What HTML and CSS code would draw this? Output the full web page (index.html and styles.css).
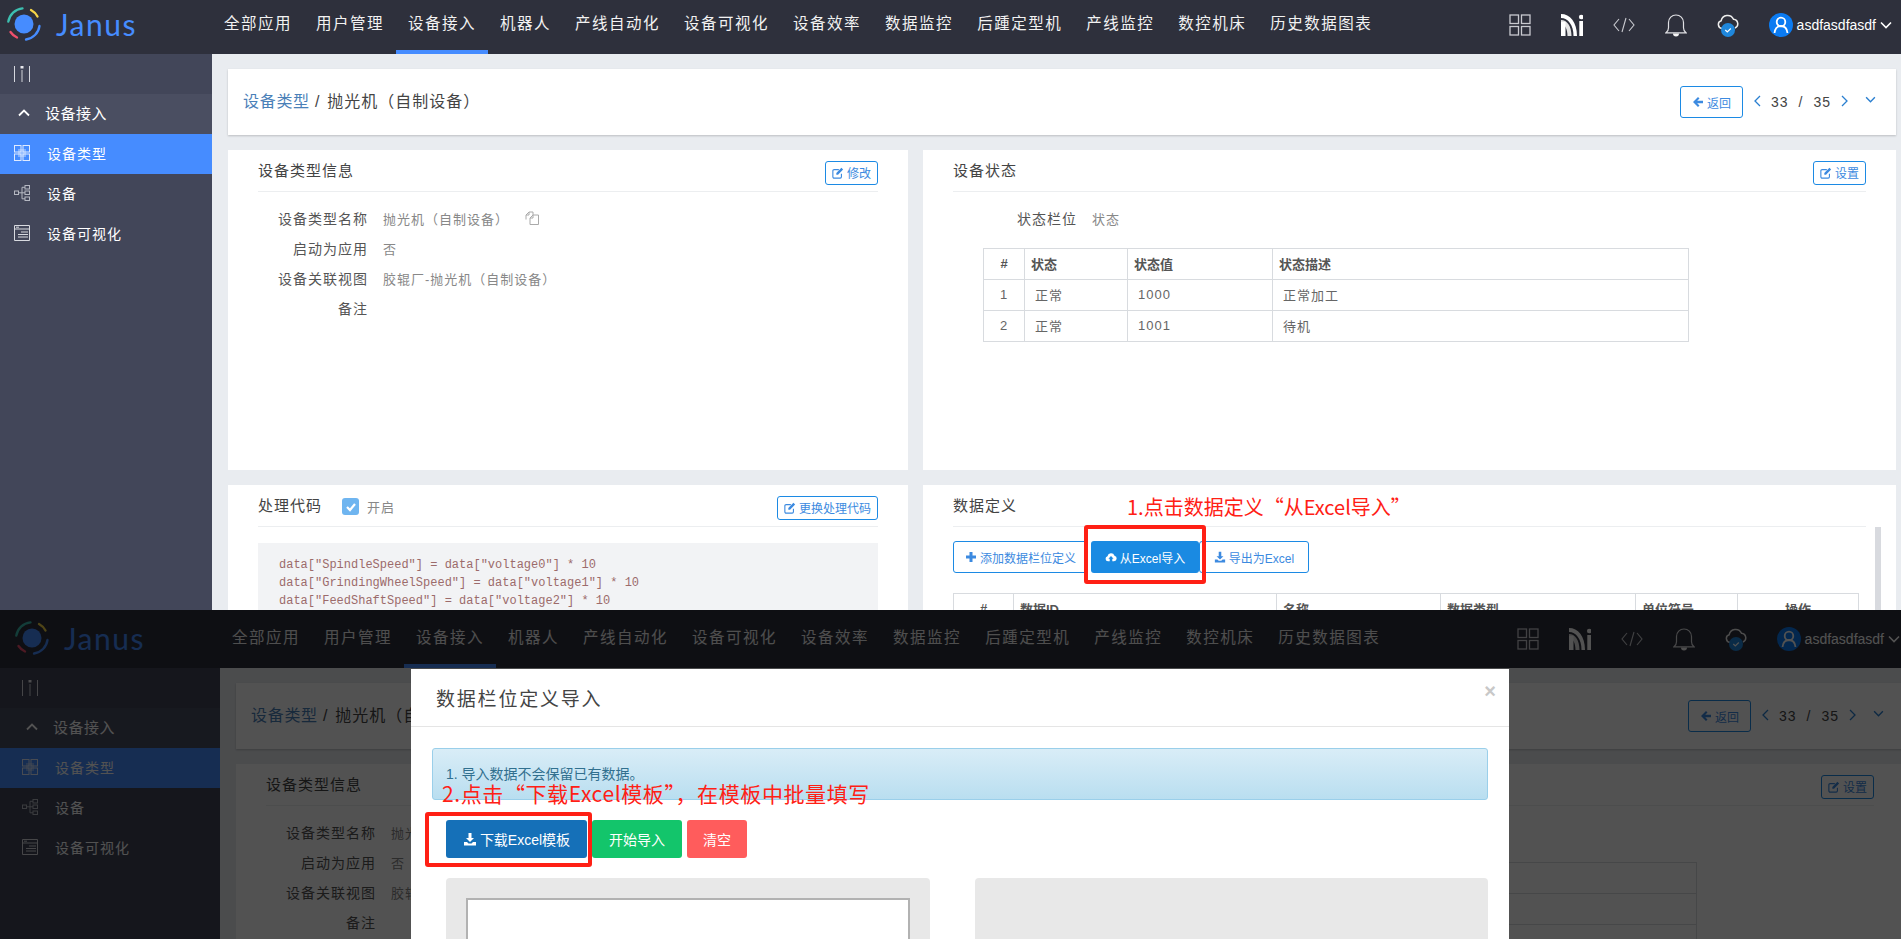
FILE: index.html
```html
<!DOCTYPE html>
<html lang="zh-CN">

<head>
    <meta charset="UTF-8">
    <title>Janus 设备接入</title>
    <link rel="stylesheet" href="styles.css">
</head>

<body>

    <!-- 图标 -->
    <svg class="sprite" xmlns="http://www.w3.org/2000/svg">
        <symbol id="i-grid" viewBox="0 0 22 22"><g fill="none" stroke="currentColor" stroke-width="1.3"><rect x="1" y="1" width="8.5" height="8.5"/><rect x="12.5" y="1" width="8.5" height="8.5"/><rect x="1" y="12.5" width="8.5" height="8.5"/><rect x="12.5" y="12.5" width="8.5" height="8.5"/></g></symbol>
        <symbol id="i-ni" viewBox="0 0 22 22"><path d="M0 0C9 0 16 8 16 22H12.500C12.500 11 7 4 0 4Z" fill="#fff"/><path d="M0 6C6 6 10.500 12 10.500 22H6.500C6.500 15 4 10 0 10Z" fill="#e4e4e4"/><rect x="0" y="8" width="4.500" height="14" fill="#fff"/><rect x="18.300" y="7" width="3.700" height="15" fill="#fff"/><circle cx="20.200" cy="3" r="2.300" fill="#fff"/></symbol>
        <symbol id="i-code" viewBox="0 0 22 16"><path d="M6 2 1 8l5 6M16 2l5 6-5 6M13 1 9 15" fill="none" stroke="currentColor" stroke-width="1.1"/></symbol>
        <symbol id="i-bell" viewBox="0 0 22 23"><path d="M1 18.800c1.500-1 2.500-2.500 2.500-5V8.500a7.500 7.500 0 0 1 15 0v5.300c0 2.500 1 4 2.500 5Z" fill="none" stroke="#e0e0e4" stroke-width="1.200"/><path d="M8 19.500h6a3 3 0 0 1-6 0Z" fill="#f5f5f5"/></symbol>
        <symbol id="i-cloud" viewBox="0 0 22 23"><path d="M5 14.500a4 4 0 0 1-.8-7.800 6.500 6.500 0 0 1 12.300-1.500 4.600 4.600 0 0 1 1.500 8.800" fill="none" stroke="#eee" stroke-width="1.500"/><circle cx="11" cy="16" r="7" fill="#1f87dc"/><path d="m8.300 16 2 2 3.500-3.500" fill="none" stroke="#fff" stroke-width="1.200"/></symbol>
        <symbol id="i-user" viewBox="0 0 24 24"><circle cx="12" cy="12" r="12" fill="#0b7bf2"/><circle cx="12" cy="9" r="4.300" fill="none" stroke="#fff" stroke-width="1.800"/><path d="M5.500 20c.5-4.500 3-7 6.500-7s6 2.500 6.500 7" fill="none" stroke="#fff" stroke-width="1.800"/></symbol>
        <symbol id="i-chev-down" viewBox="0 0 12 8"><path d="m1 1.500 5 5 5-5" fill="none" stroke="currentColor" stroke-width="1.600"/></symbol>
        <symbol id="i-chev-up" viewBox="0 0 12 8"><path d="m1 6.500 5-5 5 5" fill="none" stroke="currentColor" stroke-width="1.800"/></symbol>
        <symbol id="i-chev-left" viewBox="0 0 7 12"><path d="M6 1 1 6l5 5" fill="none" stroke="currentColor" stroke-width="1.300"/></symbol>
        <symbol id="i-chev-right" viewBox="0 0 7 12"><path d="m1 1 5 5-5 5" fill="none" stroke="currentColor" stroke-width="1.300"/></symbol>
        <symbol id="i-toggle" viewBox="0 0 16 16"><path d="M.5 0v16M15.500 0v16" stroke="#d5d7de" fill="none"/><path d="M8 4v12" stroke="#8a8d99" stroke-width="2" fill="none"/><rect x="6.500" y="0" width="3" height="2.500" fill="#e8e8ee"/></symbol>
        <symbol id="i-apps" viewBox="0 0 16 16"><path d="M4 4h8v8H4Z" fill="#cfe0ff" opacity=".45"/><g fill="none" stroke="#dfeaff" stroke-width="1"><rect x=".5" y=".5" width="6.500" height="6.500"/><rect x="9" y=".5" width="6.500" height="6.500"/><rect x=".5" y="9" width="6.500" height="6.500"/><rect x="9" y="9" width="6.500" height="6.500"/></g></symbol>
        <symbol id="i-tree" viewBox="0 0 16 16"><g fill="none" stroke="#b5b8c2" stroke-width="1"><rect x=".5" y="6" width="4" height="3.500"/><rect x="11" y=".5" width="4.500" height="3.500"/><rect x="11" y="6" width="4.500" height="3.500"/><rect x="11" y="12" width="4.500" height="3.500"/><path d="M4.500 7.800H11M8 2.300v11.500M8 2.300h3M8 13.800h3"/></g></symbol>
        <symbol id="i-page" viewBox="0 0 16 16"><path d="M.5.5h15v15H.5ZM.5 4h15" fill="none" stroke="#d8dae0"/><path d="M2 2.200h3M7 7h7M4 9.500h10M4 12h10" stroke="#d8dae0" fill="none"/></symbol>
        <symbol id="i-edit" viewBox="0 0 14 14"><path d="M11 8v3.500a1.500 1.500 0 0 1-1.500 1.500h-7A1.500 1.500 0 0 1 1 11.500v-7A1.500 1.500 0 0 1 2.500 3H8" fill="none" stroke="currentColor" stroke-width="1.300"/><path d="m5 7 6-6 2 2-6 6H5Z" fill="currentColor"/></symbol>
        <symbol id="i-back" viewBox="0 0 12 12"><path d="M6 1 1 6l5 5 1.500-1.500L5.200 7.200H11V4.800H5.200L7.500 2.500Z" fill="currentColor"/></symbol>
        <symbol id="i-plus" viewBox="0 0 12 12"><path d="M4.500 1h3v3.500H11v3H7.500V11h-3V7.500H1v-3h3.500Z" fill="currentColor"/></symbol>
        <symbol id="i-upload" viewBox="0 0 14 12"><path d="M3.500 11a3 3 0 0 1-.6-5.900 4.300 4.300 0 0 1 8.200-.6A3.300 3.300 0 0 1 10.500 11h-2V8H10L7 4.800 4 8h1.500v3Z" fill="currentColor"/></symbol>
        <symbol id="i-download" viewBox="0 0 14 14"><path d="M5.500 1h3v5H11L7 10 3 6h2.500Z" fill="currentColor"/><path d="M1 10h3l1.500 1.500h3L10 10h3v3.500H1Z" fill="currentColor"/></symbol>
        <symbol id="i-doc" viewBox="0 0 14 14"><path d="M1 8.500V4l3-3h4v3M1 4h3V1" fill="none" stroke="#aaa"/><path d="M5 7l3-3h5.500v9.500H5ZM8 4v3H5" fill="none" stroke="#aaa"/></symbol>
        <symbol id="i-check" viewBox="0 0 12 12"><path d="m2 6 3 3 5-6" fill="none" stroke="#fff" stroke-width="2.200"/></symbol>
        <symbol id="i-logo" viewBox="0 0 34 34"><circle cx="17" cy="17" r="9.500" fill="#468cff"/><g fill="none" stroke-width="2.300" stroke-linecap="round"><path d="M1.300 14.700A15.800 15.800 0 0 1 15.500 1.300" stroke="#3dbfb0"/><path d="M24 3a15.800 15.800 0 0 1 6.500 6.500" stroke="#f5d547"/><path d="M3.500 25a15.800 15.800 0 0 0 6.500 5.500" stroke="#ef4f6c"/><path d="M32.500 19A15.800 15.800 0 0 1 19 32.500" stroke="#468cff"/></g></symbol>
    </svg>

    <!-- 第一张：设备类型详情 -->
    <section class="shot shot-first">
        <header class="topbar">
            <div class="logo"><svg class="logo-mark"><use href="#i-logo"/></svg><span class="logo-name">Janus</span></div>
            <nav class="nav">
                <a>全部应用</a><a>用户管理</a><a class="active">设备接入</a><a>机器人</a><a>产线自动化</a><a>设备可视化</a><a>设备效率</a><a>数据监控</a><a>后踵定型机</a><a>产线监控</a><a>数控机床</a><a>历史数据图表</a>
            </nav>
            <div class="tools">
                <svg class="tool tool-grid"><use href="#i-grid"/></svg>
                <svg class="tool"><use href="#i-ni"/></svg>
                <svg class="tool tool-code"><use href="#i-code"/></svg>
                <svg class="tool tool-tall"><use href="#i-bell"/></svg>
                <svg class="tool tool-tall"><use href="#i-cloud"/></svg>
                <div class="user"><svg class="avatar"><use href="#i-user"/></svg><span>asdfasdfasdf</span><svg class="user-chev"><use href="#i-chev-down"/></svg></div>
            </div>
        </header>
        <div class="page">
            <aside class="sidebar">
                <div class="side-toggle"><svg class="side-icon"><use href="#i-toggle"/></svg></div>
                <div class="side-group"><svg class="group-chev"><use href="#i-chev-up"/></svg>设备接入</div>
                <div class="side-item active"><svg class="side-icon"><use href="#i-apps"/></svg>设备类型</div>
                <div class="side-item"><svg class="side-icon"><use href="#i-tree"/></svg>设备</div>
                <div class="side-item"><svg class="side-icon"><use href="#i-page"/></svg>设备可视化</div>
            </aside>
            <main class="main">
                <div class="crumb-card">
                    <div class="crumbs"><a>设备类型</a> / <span class="crumb-now">抛光机（自制设备）</span></div>
                    <div class="pager-box">
                        <button class="btn btn-line btn-back"><svg class="btn-icon"><use href="#i-back"/></svg>返回</button>
                        <div class="pager"><svg class="pg-arrow"><use href="#i-chev-left"/></svg><span>33</span><span>/</span><span>35</span><svg class="pg-arrow"><use href="#i-chev-right"/></svg><svg class="pg-chev"><use href="#i-chev-down"/></svg></div>
                    </div>
                </div>
                <div class="cards">
                    <div class="card">
                        <div class="card-head"><h3>设备类型信息</h3><button class="btn btn-line btn-small"><svg class="btn-icon"><use href="#i-edit"/></svg>修改</button></div>
                        <div class="info-list">
                            <div class="info-row"><label>设备类型名称</label><span>抛光机（自制设备）</span><svg class="copy-icon"><use href="#i-doc"/></svg></div>
                            <div class="info-row"><label>启动为应用</label><span>否</span></div>
                            <div class="info-row"><label>设备关联视图</label><span>胶辊厂-抛光机（自制设备）</span></div>
                            <div class="info-row"><label>备注</label><span></span></div>
                        </div>
                    </div>
                    <div class="card">
                        <div class="card-head"><h3>设备状态</h3><button class="btn btn-line btn-small"><svg class="btn-icon"><use href="#i-edit"/></svg>设置</button></div>
                        <div class="info-list info-wide">
                            <div class="info-row"><label>状态栏位</label><span>状态</span></div>
                        </div>
                        <table class="grid-table state-table">
                            <tr><th class="num">#</th><th class="c-state">状态</th><th class="c-value">状态值</th><th>状态描述</th></tr>
                            <tr><td class="num">1</td><td>正常</td><td>1000</td><td>正常加工</td></tr>
                            <tr><td class="num">2</td><td>正常</td><td>1001</td><td>待机</td></tr>
                        </table>
                    </div>
                    <div class="card">
                        <div class="card-head">
                            <h3>处理代码</h3>
                            <span class="checkbox"><svg><use href="#i-check"/></svg></span><span class="check-label">开启</span>
                            <button class="btn btn-line btn-small"><svg class="btn-icon"><use href="#i-edit"/></svg>更换处理代码</button>
                        </div>
<pre class="code">data["SpindleSpeed"] = data["voltage0"] * 10
data["GrindingWheelSpeed"] = data["voltage1"] * 10
data["FeedShaftSpeed"] = data["voltage2"] * 10</pre>
                    </div>
                    <div class="card">
                        <div class="card-head"><h3>数据定义</h3></div>
                        <div class="def-actions">
                            <button class="btn btn-line btn-add"><svg class="btn-icon"><use href="#i-plus"/></svg>添加数据栏位定义</button>
                            <button class="btn btn-blue btn-import"><svg class="btn-icon"><use href="#i-upload"/></svg>从Excel导入</button>
                            <button class="btn btn-line btn-export"><svg class="btn-icon"><use href="#i-download"/></svg>导出为Excel</button>
                        </div>
                        <table class="grid-table def-table">
                            <tr><th class="num">#</th><th class="c-id">数据ID</th><th class="c-name">名称</th><th class="c-type">数据类型</th><th class="c-unit">单位符号</th><th class="num">操作</th></tr>
                        </table>
                        <div class="scrollbar"></div>
                    </div>
                </div>
            </main>
        </div>

        <!-- 标注 -->
        <div class="note note-one">1.点击数据定义“从Excel导入”</div>
        <div class="mark mark-one"></div>
    </section>

    <!-- 第二张：弹窗 -->
    <section class="shot shot-second">
        <header class="topbar">
            <div class="logo"><svg class="logo-mark"><use href="#i-logo"/></svg><span class="logo-name">Janus</span></div>
            <nav class="nav">
                <a>全部应用</a><a>用户管理</a><a class="active">设备接入</a><a>机器人</a><a>产线自动化</a><a>设备可视化</a><a>设备效率</a><a>数据监控</a><a>后踵定型机</a><a>产线监控</a><a>数控机床</a><a>历史数据图表</a>
            </nav>
            <div class="tools">
                <svg class="tool tool-grid"><use href="#i-grid"/></svg>
                <svg class="tool"><use href="#i-ni"/></svg>
                <svg class="tool tool-code"><use href="#i-code"/></svg>
                <svg class="tool tool-tall"><use href="#i-bell"/></svg>
                <svg class="tool tool-tall"><use href="#i-cloud"/></svg>
                <div class="user"><svg class="avatar"><use href="#i-user"/></svg><span>asdfasdfasdf</span><svg class="user-chev"><use href="#i-chev-down"/></svg></div>
            </div>
        </header>
        <div class="page">
            <aside class="sidebar">
                <div class="side-toggle"><svg class="side-icon"><use href="#i-toggle"/></svg></div>
                <div class="side-group"><svg class="group-chev"><use href="#i-chev-up"/></svg>设备接入</div>
                <div class="side-item active"><svg class="side-icon"><use href="#i-apps"/></svg>设备类型</div>
                <div class="side-item"><svg class="side-icon"><use href="#i-tree"/></svg>设备</div>
                <div class="side-item"><svg class="side-icon"><use href="#i-page"/></svg>设备可视化</div>
            </aside>
            <main class="main">
                <div class="crumb-card">
                    <div class="crumbs"><a>设备类型</a> / <span class="crumb-now">抛光机（自制设备）</span></div>
                    <div class="pager-box">
                        <button class="btn btn-line btn-back"><svg class="btn-icon"><use href="#i-back"/></svg>返回</button>
                        <div class="pager"><svg class="pg-arrow"><use href="#i-chev-left"/></svg><span>33</span><span>/</span><span>35</span><svg class="pg-arrow"><use href="#i-chev-right"/></svg><svg class="pg-chev"><use href="#i-chev-down"/></svg></div>
                    </div>
                </div>
                <div class="cards">
                    <div class="card">
                        <div class="card-head"><h3>设备类型信息</h3></div>
                        <div class="info-list">
                            <div class="info-row"><label>设备类型名称</label><span>抛光机（自制设备）</span></div>
                            <div class="info-row"><label>启动为应用</label><span>否</span></div>
                            <div class="info-row"><label>设备关联视图</label><span>胶辊厂-抛光机（自制设备）</span></div>
                            <div class="info-row"><label>备注</label><span></span></div>
                        </div>
                    </div>
                    <div class="card">
                        <div class="card-head"><h3>设备状态</h3><button class="btn btn-line btn-small"><svg class="btn-icon"><use href="#i-edit"/></svg>设置</button></div>
                        <div class="info-list info-wide">
                            <div class="info-row"><label>状态栏位</label><span>状态</span></div>
                        </div>
                        <table class="grid-table state-table">
                            <tr><th class="num">#</th><th class="c-state">状态</th><th class="c-value">状态值</th><th>状态描述</th></tr>
                            <tr><td class="num">1</td><td>正常</td><td>1000</td><td>正常加工</td></tr>
                            <tr><td class="num">2</td><td>正常</td><td>1001</td><td>待机</td></tr>
                        </table>
                    </div>
                </div>
            </main>
        </div>

        <div class="backdrop"></div>
        <div class="modal">
            <div class="modal-head"><h4>数据栏位定义导入</h4><span class="modal-close">×</span></div>
            <div class="modal-body">
                <div class="alert">1. 导入数据不会保留已有数据。</div>
                <div class="import-actions">
                    <button class="btn btn-dark btn-big"><svg class="btn-icon"><use href="#i-download"/></svg>下载Excel模板</button>
                    <button class="btn btn-green btn-big">开始导入</button>
                    <button class="btn btn-red btn-big">清空</button>
                </div>
                <div class="import-panels">
                    <div class="panel"><div class="panel-inner"></div></div>
                    <div class="panel"></div>
                </div>
            </div>
        </div>

        <!-- 标注 -->
        <div class="note note-two">2.点击“下载Excel模板”，在模板中批量填写</div>
        <div class="mark mark-two"></div>
    </section>

</body>

</html>
```

FILE: styles.css
```css
* {
    box-sizing: border-box;
}

html,
body {
    margin: 0;
    padding: 0;
    height: 939px;
    overflow: hidden;
}

body {
    font-family: "Liberation Sans", "Noto Sans CJK SC", sans-serif;
    font-size: 14px;
    color: #444;
    background-color: #0d0e11;
}

.sprite {
    display: none;
}

.shot {
    position: relative;
    overflow: hidden;
    --ox: 0px;
    --oy: 0px;
}

.shot-first {
    height: 610px;
}

.shot-second {
    height: 329px;
    --ox: 8px;
    --oy: 4px;
}

/* 顶部导航 */
.topbar {
    display: flex;
    height: calc(54px + var(--oy));
    padding: var(--oy) 0 0 var(--ox);
    background-color: #2e303c;
    color: #f0f0f0;
}

.logo {
    display: flex;
    align-items: center;
    width: 212px;
    height: 48px;
    flex-shrink: 0;
}

.logo-mark {
    width: 34px;
    height: 34px;
    margin-left: 7px;
}

.logo-name {
    margin-left: 15px;
    font-family: "Lato", sans-serif;
    font-size: 30px;
    color: #468cff;
    letter-spacing: 1.5px;
}

.nav {
    display: flex;
}

.nav a {
    height: 54px;
    padding: 13px 12px 0;
    font-size: 15.5px;
    line-height: 22px;
    letter-spacing: 1.5px;
    color: #f2f2f2;
    white-space: nowrap;
}

.nav a.active {
    border-bottom: 4px solid #468cff;
}

.tools {
    display: flex;
    align-items: center;
    gap: 30px;
    height: 50px;
    margin-left: auto;
    padding-right: calc(9px - var(--ox));
    color: #c9cad0;
}

.tool {
    width: 22px;
    height: 22px;
}

.tool-code {
    height: 16px;
}

.tool-tall {
    height: 23px;
}

.user {
    display: flex;
    align-items: center;
    color: #fff;
}

.avatar {
    width: 24px;
    height: 24px;
    margin-right: 4px;
}

.user-chev {
    width: 12px;
    height: 8px;
    margin-left: 4px;
}

/* 页面主体 */
.page {
    display: flex;
    height: 1200px;
    background-color: #e9ecf0;
}

.sidebar {
    width: calc(212px + var(--ox));
    flex-shrink: 0;
    background-color: #424659;
    color: #fff;
}

.side-toggle {
    display: flex;
    align-items: center;
    height: 40px;
    padding-left: calc(14px + var(--ox));
}

.side-group {
    display: flex;
    align-items: center;
    height: 40px;
    padding: 0 0 3px calc(18px + var(--ox));
    background-color: #4a4e61;
    font-size: 15px;
    letter-spacing: 0.5px;
}

.group-chev {
    width: 12px;
    height: 8px;
    margin-right: 15px;
}

.side-item {
    display: flex;
    align-items: center;
    height: 40px;
    padding: 0 0 2px calc(14px + var(--ox));
    font-size: 14px;
    letter-spacing: 1px;
}

.side-item.active {
    background-color: #468cff;
}

.side-icon {
    width: 16px;
    height: 16px;
    margin-right: 17px;
}

.main {
    flex: 1;
    padding: 15px 0 0 16px;
}

.crumb-card {
    display: flex;
    align-items: center;
    width: 1668px;
    height: 66px;
    padding: 0 20px 0 15px;
    margin-bottom: 15px;
    background-color: #fff;
    box-shadow: 0 1px 2px rgba(0, 0, 0, 0.2);
}

.crumbs {
    padding-bottom: 4px;
    font-size: 16px;
    letter-spacing: 0.7px;
    color: #444;
}

.crumbs a {
    color: #4a80b8;
}

.crumb-now {
    margin-left: 2px;
    letter-spacing: 1px;
}

.pager-box {
    display: flex;
    align-items: center;
    margin-left: auto;
}

.pager {
    display: flex;
    align-items: center;
    gap: 10px;
    margin-left: 11px;
    font-size: 14px;
    letter-spacing: 1px;
    color: #444;
}

.pg-arrow {
    width: 7px;
    height: 12px;
    margin-bottom: 2px;
    color: #2a7fd0;
}

.pg-chev {
    width: 11px;
    height: 7px;
    margin: 0 0 5px 7px;
    color: #2a7fd0;
}

.cards {
    display: grid;
    grid-template-columns: 680px 973px;
    grid-auto-rows: 320px;
    gap: 15px;
}

.card {
    position: relative;
    padding: 0 30px;
    background-color: #fff;
}

.card-head {
    display: flex;
    align-items: center;
    height: 42px;
    padding-top: 4px;
    border-bottom: 1px solid #eceef0;
}

.card-head h3 {
    margin: 0 0 6px;
    font-size: 15px;
    font-weight: 400;
    letter-spacing: 1px;
    color: #444;
}

.checkbox {
    display: flex;
    align-items: center;
    justify-content: center;
    width: 17px;
    height: 17px;
    margin: 0 0 2px 20px;
    border-radius: 3px;
    background-color: #6fb5f0;
}

.checkbox svg {
    width: 12px;
    height: 12px;
}

.check-label {
    margin: 0 0 3px 8px;
    font-size: 13px;
    letter-spacing: 1px;
    color: #888;
}

/* 按钮 */
.btn {
    display: inline-flex;
    align-items: center;
    justify-content: center;
    border-radius: 3px;
    font-family: inherit;
    font-size: 12px;
    white-space: nowrap;
    cursor: pointer;
}

.btn-line {
    border: 1px solid #1c8ae4;
    background-color: #fff;
    color: #3c8ae0;
}

.btn-icon {
    width: 12px;
    height: 12px;
    margin-right: 3px;
}

.btn-small {
    height: 24px;
    padding: 0 6px;
    margin-left: auto;
}

.btn-back {
    width: 63px;
    height: 32px;
    padding: 0;
}

.def-actions {
    display: flex;
    margin-top: 14px;
}

.def-actions .btn {
    height: 32px;
    padding: 0;
}

.btn-add {
    width: 135px;
}

.btn-import {
    width: 108px;
    margin-left: 3px;
}

.btn-export {
    width: 110px;
}

.btn-blue {
    border: 0;
    background-color: #1a8ae2;
    color: #fff;
}

/* 信息行 */
.info-list {
    padding-top: 11px;
    font-size: 13px;
}

.info-row {
    display: flex;
    align-items: center;
    height: 30px;
    letter-spacing: 1px;
}

.info-row label {
    width: 110px;
    margin-right: 15px;
    font-size: 14px;
    text-align: right;
    color: #555;
}

.info-row span {
    color: #888;
}

.info-wide label {
    width: 124px;
}

.copy-icon {
    width: 14px;
    height: 14px;
    margin-left: 16px;
}

/* 表格 */
.grid-table {
    border-collapse: collapse;
    table-layout: fixed;
    font-size: 13px;
    color: #666;
}

.grid-table th,
.grid-table td {
    height: 31px;
    padding: 0 10px 2px;
    border: 1px solid #d8dbdf;
    text-align: left;
    letter-spacing: 1px;
}

.grid-table th {
    padding-left: 6px;
    font-weight: 700;
    color: #555;
    letter-spacing: 0;
}

.grid-table .num {
    padding: 0 0 2px;
    text-align: center;
    width: 41px;
}

.state-table {
    width: 706px;
    margin: 15px 0 0 30px;
}

.c-state {
    width: 103px;
}

.c-value {
    width: 145px;
}

.def-table {
    width: 905px;
    margin-top: 20px;
}

.def-table .num {
    width: 60px;
}

.def-table .num:last-child {
    width: 121px;
}

.c-id {
    width: 263px;
}

.c-name {
    width: 164px;
}

.c-type {
    width: 195px;
}

.c-unit {
    width: 102px;
}

.scrollbar {
    position: absolute;
    top: 42px;
    right: 15px;
    bottom: 0;
    width: 6px;
    background-color: #d8dadf;
}

.code {
    height: 200px;
    margin: 16px 0 0;
    padding: 13px 21px;
    background-color: #f2f3f5;
    font-family: "Liberation Mono", monospace;
    font-size: 12px;
    line-height: 18px;
    color: #9c6b6b;
}

/* 标注 */
.note {
    position: absolute;
    font-family: "Noto Sans CJK SC", sans-serif;
    color: #ff2015;
    white-space: nowrap;
    z-index: 5;
}

.note-one {
    left: 1127px;
    top: 493px;
    font-size: 20px;
    line-height: 28px;
}

.note-two {
    left: 442px;
    top: 169px;
    font-size: 21px;
    line-height: 28px;
    letter-spacing: 0.6px;
}

.mark {
    position: absolute;
    border: 4px solid #ff2015;
    border-radius: 3px;
    z-index: 5;
}

.mark-one {
    left: 1084px;
    top: 525px;
    width: 122px;
    height: 59px;
}

.mark-two {
    left: 425px;
    top: 202px;
    width: 167px;
    height: 55px;
}

/* 弹窗 */
.backdrop {
    position: absolute;
    inset: 0;
    background-color: rgba(0, 0, 0, 0.68);
}

.modal {
    position: absolute;
    left: 411px;
    top: 59px;
    width: 1098px;
    height: 400px;
    background-color: #fff;
}

.modal-head {
    display: flex;
    align-items: center;
    justify-content: space-between;
    height: 58px;
    padding: 0 13px 0 25px;
    border-bottom: 1px solid #e5e5e5;
}

.modal-head h4 {
    margin: 0;
    font-size: 19px;
    font-weight: 400;
    letter-spacing: 1.8px;
    color: #444;
}

.modal-close {
    margin-bottom: 13px;
    font-size: 20px;
    font-weight: 700;
    color: #c8c8c8;
}

.modal-body {
    padding: 21px;
}

.alert {
    height: 52px;
    padding: 17px 13px 0;
    border: 1px solid #9acfea;
    border-radius: 3px;
    background-image: linear-gradient(#d9edf7, #b9def0);
    font-size: 14px;
    line-height: 16px;
    color: #31708f;
}

.import-actions {
    display: flex;
    gap: 5px;
    margin: 20px 0 20px 14px;
}

.btn-big {
    height: 38px;
    border: 0;
    font-size: 14px;
    color: #fff;
}

.btn-big .btn-icon {
    width: 14px;
    height: 14px;
}

.btn-dark {
    width: 141px;
    background-color: #1570b8;
}

.btn-green {
    width: 90px;
    background-color: #13c56b;
}

.btn-red {
    width: 60px;
    background-color: #ff5c5c;
}

.import-panels {
    display: grid;
    grid-template-columns: 484px 513px;
    gap: 45px;
    margin-left: 14px;
}

.panel {
    height: 200px;
    padding: 20px;
    border-radius: 4px;
    background-color: #e8e8e8;
}

.panel-inner {
    height: 180px;
    border: 2px solid #b2b2b2;
    background-color: #fff;
}
```
